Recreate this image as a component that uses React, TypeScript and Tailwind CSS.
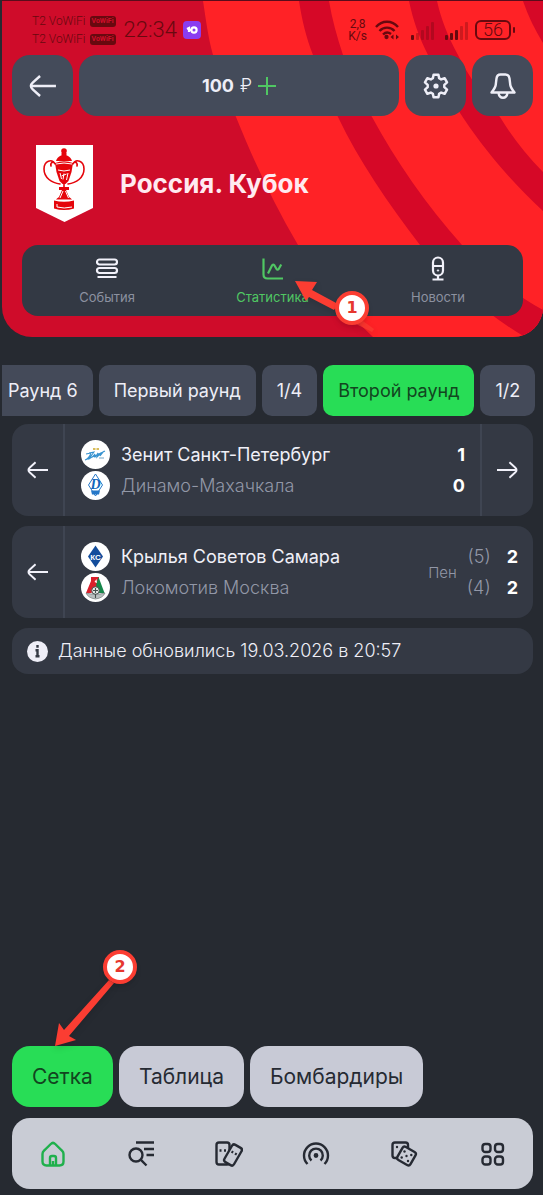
import type { ReactNode } from "react";
import clsx from "clsx";

const rounds = ["Раунд 6", "Первый раунд", "1/4", "Второй раунд", "1/2"];
const views = ["Сетка", "Таблица", "Бомбардиры"];

function HeaderPattern() {
  return (
    <svg
      aria-hidden
      className="absolute inset-0 h-full w-full"
      preserveAspectRatio="xMaxYMin slice"
      viewBox="0 0 541 336"
    >
      <path
        d="M201 0C204 19 206 36 211 54C217 77 225 97 234 116C251 158 271 202 296 244C318 280 345 311 371 336H541V0Z"
        fill="#ff2226"
      />
      <path
        d="M297 0C300 19 304 36 311 54C318 76 326 96 336 116C357 160 386 202 418 244C448 280 482 312 523 336L541 327V309C510 292 484 270 460 244C424 204 394 160 370 116C356 93 347 75 341 54C335 36 330 18 327 0Z"
        fill="#d60827"
      />
      <path
        d="M407 0C411 19 417 36 426 54C434 76 448 97 462 118C487 155 513 184 541 210V171C524 154 510 136 498 116C481 95 466 75 456 54C446 36 439 18 435 0Z"
        fill="#d60827"
      />
      <path d="M521 0C526 15 533 29 541 42V0Z" fill="#d60827" />
    </svg>
  );
}

function SignalBars({ active }: { active: number }) {
  return (
    <svg aria-hidden className="h-[19px] w-6" fill="#68090f" viewBox="0 0 24 19">
      {[5, 7, 10, 14, 18].map((h, i) => (
        <rect
          height={h}
          key={h}
          opacity={i < active ? 1 : 0.32}
          rx="1"
          width="3"
          x={i * 5}
          y={19 - h}
        />
      ))}
    </svg>
  );
}

function StatusBar() {
  return (
    <div className="flex h-[54px] items-center justify-between pl-5 pr-[18px] pt-1 font-[Roboto] text-[#68090f]">
      <div className="flex items-center">
        <div className="text-xs font-light leading-[18px]">
          {["sim1", "sim2"].map((sim) => (
            <div className="flex items-center gap-1" key={sim}>
              T2 VoWiFi
              <span className="flex h-[11px] w-[26px] items-center justify-center rounded-[3px] bg-[#68090f] text-[7px] font-bold leading-[11px] text-[#d00d2b]">
                VoWiFi
              </span>
            </div>
          ))}
        </div>
        <span className="ml-2 text-[22px] font-light leading-7">22:34</span>
        <span className="ml-1.5 grid h-[18px] w-[18px] place-items-center rounded bg-[#8a3df0]">
          <svg aria-hidden className="h-3 w-3" fill="none" stroke="#fff" strokeWidth="2.2" viewBox="0 0 12 12">
            <circle cx="8" cy="6" r="2.6" />
            <path d="M1 5l2-1v4M3 6h3" />
          </svg>
        </span>
      </div>
      <div className="flex items-center">
        <div className="text-center text-xs leading-3">
          <div>2,8</div>
          <div>K/s</div>
        </div>
        <svg aria-hidden className="ml-2 h-5 w-6" fill="none" stroke="#68090f" strokeWidth="2.4" viewBox="0 0 24 20">
          <path d="M1 7C7 0 17 0 23 7M4.500 11c4-4.500 11-4.500 15 0M8 14.500c2.500-2.500 5.500-2.500 8-.5" />
          <circle cx="11.500" cy="17" fill="#68090f" r="1.400" strokeWidth="1.500" />
          <path d="M15.500 17l3-2.500v5zM24 17l-3-2.500v5z" fill="#68090f" stroke="none" />
        </svg>
        <span className="ml-3 flex gap-2.5">
          <SignalBars active={1} />
          <SignalBars active={3} />
        </span>
        <span className="ml-1.5 grid h-5 w-9 place-items-center rounded-md border-2 border-[#68090f] text-lg font-light leading-4">
          56
        </span>
        <span className="ml-0.5 h-1.5 w-0.5 rounded-sm bg-[#68090f]" />
      </div>
    </div>
  );
}

function GearIcon() {
  const points: string[] = [];
  for (let tooth = 0; tooth < 6; tooth++) {
    for (const [offset, radius] of [[-22, 8.4], [-12, 11.6], [12, 11.6], [22, 8.4]]) {
      const angle = ((tooth * 60 - 90 + offset) * Math.PI) / 180;
      points.push(`${14 + radius * Math.cos(angle)},${14 + radius * Math.sin(angle)}`);
    }
  }

  return (
    <svg aria-hidden className="h-7 w-7" viewBox="0 0 28 28">
      <polygon
        fill="none"
        points={points.join(" ")}
        stroke="currentColor"
        strokeLinejoin="round"
        strokeWidth="2.5"
      />
      <circle cx="14" cy="14" fill="currentColor" r="2.6" />
    </svg>
  );
}

function BellIcon() {
  return (
    <svg aria-hidden className="h-7 w-7" fill="none" stroke="currentColor" strokeLinejoin="round" strokeWidth="2.4" viewBox="0 0 28 28">
      <path d="M11.500 2.500h5q3.500 0 4 4l.8 6.500q.3 2.500 4.200 7.500H2.500q3.900-5 4.200-7.500l.8-6.500q.5-4 4-4z" />
      <path d="M9.500 21c.5 3 2 4.800 4.500 4.800s4-1.800 4.500-4.800" />
    </svg>
  );
}

function BackArrow({ className }: { className: string }) {
  return (
    <svg aria-hidden className={className} fill="none" stroke="currentColor" strokeWidth="2" viewBox="0 0 22 18">
      <path d="M22 9H1.500M9 .8L3 6.300Q0 9 3 11.700L9 17.200" />
    </svg>
  );
}

function CupLogo() {
  return (
    <svg aria-hidden className="h-[77px] w-[57px]" viewBox="0 0 57 77">
      <path d="M0 0h57v63L28.500 77 0 63z" fill="#fff" />
      <g fill="#e5050b">
        <circle cx="28" cy="6" r="2.800" />
        <path d="M25.500 8h5v2.500h-5zM20 16q1-4 5-5.500h6q4 1.500 5 5.500z" />
        <path d="M19 18q9-3.500 18 0l-1.500 9-3 9-3 3h-3l-3-3-3-9z" />
        <path d="M23 42h10v3H23zM26 45h4l3 7q2 1 3 2.500H20q1-1.500 3-2.500zM18 55.500q10 2.500 20 0v8q-10 3-20 0z" />
      </g>
      <g fill="none" stroke="#e5050b" strokeLinecap="round" strokeWidth="1.600">
        <path d="M19 19c-3-6-11-3-11 5 0 9 8 14 16 15M37 19c3-6 11-3 11 5 0 9-8 14-16 15" />
        <path d="M15 21q-1-3 2-4M41 21q1-3-2-4M28 38v5" />
      </g>
      <g fill="none" stroke="#fff" strokeWidth="1">
        <path d="M20 19q8-2 16 0M22 25q6 2 12 0M24 28l1.500 6M28 28.500l-1 6M32 28l-1.500 7M25.500 31l5-2M27 46l-3 7M29.500 46l3 7M21 59v3q7 2 15 0" />
      </g>
    </svg>
  );
}

function ZenitLogo() {
  return (
    <>
      <path d="M4 20c3-1 5-4 6-7l-5 1M8 13l5-1c-2 3-5 6-5 7q4-2 6-5c-1 3-1 4 1 2l2-3-1 4 4-4-1 3 4-5M4 20q8-3 20-9" fill="none" stroke="#3893d0" strokeWidth="1.100" />
      <path d="M12 8h2.500v2H12zM15.500 8H18v2h-2.500z" fill="#d8bd5c" />
      <path d="M18 18h5" stroke="#75a5c6" strokeWidth="1.200" />
    </>
  );
}

function DynamoLogo() {
  return (
    <>
      <path d="M14.500 3l7 11-7 11-7-11z" fill="#fff" stroke="#2678c8" strokeWidth="1" />
      <text fill="#1266bb" fontFamily="Liberation Serif, serif" fontSize="14" fontStyle="italic" fontWeight="700" textAnchor="middle" x="14.500" y="18">
        D
      </text>
      <path d="M10 19.500h9l-1 4h-7z" fill="#2678c8" />
    </>
  );
}

function KrylyaLogo() {
  return (
    <>
      <path d="M14.500 3.500l7.500 11-7.500 11-7.500-11z" fill="#134d9c" />
      <text fill="#fff" fontFamily="Liberation Sans, sans-serif" fontSize="8" fontWeight="700" textAnchor="middle" x="14.500" y="17.500">
        КС
      </text>
    </>
  );
}

function LokomotivLogo() {
  return (
    <>
      <path d="M10 4h8l-1 10h-4L10.500 20H5l5-12z" fill="#d91f2b" />
      <path d="M17.500 4l6 16H18l-3-8z" fill="#16864a" />
      <path d="M13.500 9l2-3 .5 4z" fill="#fff" />
      <path d="M5 20q2 5 9.500 6Q22 25 24 20l-5 1H10z" fill="#b9bfc0" stroke="#626968" strokeWidth=".6" />
      <circle cx="14.500" cy="17.500" fill="#e4e8e7" r="3.800" stroke="#47504e" strokeWidth="1" />
      <path d="M14.500 15v5M12 17.500h5M14.500 21v4" stroke="#47504e" strokeWidth="1.100" />
    </>
  );
}

interface Team {
  name: string;
  score: number;
  penalties?: number;
  logo: ReactNode;
}

interface MatchCardProps {
  teams: Team[];
  hasNext?: boolean;
}

function MatchCard({ teams, hasNext = false }: MatchCardProps) {
  const hasPenalties = teams[0].penalties !== undefined;

  return (
    <article className="flex h-[92px] overflow-hidden rounded-2xl bg-[#343944]">
      <button
        aria-label="Предыдущий матч"
        className="grid w-[53px] shrink-0 place-items-center border-r-2 border-[#3f4552] text-[#f1f1fa]"
        type="button"
      >
        <BackArrow className="h-[18px] w-[21px]" />
      </button>
      <div className="flex flex-1 items-center pl-4 pr-[15px] text-lg leading-[29px]">
        <div className="flex flex-1 flex-col gap-0.5">
          {teams.map((team, i) => (
            <div className="flex items-center gap-[11px]" key={team.name}>
              <svg aria-hidden className="h-[29px] w-[29px]" viewBox="0 0 29 29">
                <circle cx="14.500" cy="14.500" fill="#fff" r="14.500" />
                {team.logo}
              </svg>
              <span className={i === 0 ? "text-[#f0f0f8]" : "font-light text-[#9297a7]"}>{team.name}</span>
            </div>
          ))}
        </div>
        {hasPenalties && <span className="mr-2.5 text-[15px] font-light text-[#9297a7]">Пен</span>}
        <div className="flex flex-col gap-0.5">
          {teams.map((team) => (
            <div className="flex justify-end gap-4" key={team.name}>
              {hasPenalties && <span className="font-light text-[#9297a7]">({team.penalties})</span>}
              <span className="font-bold text-white">{team.score}</span>
            </div>
          ))}
        </div>
      </div>
      {hasNext && (
        <button
          aria-label="Следующий матч"
          className="grid w-[53px] shrink-0 place-items-center border-l-2 border-[#3f4552] text-[#f1f1fa]"
          type="button"
        >
          <BackArrow className="h-[18px] w-[21px] rotate-180" />
        </button>
      )}
    </article>
  );
}

const sectionTabs = [
  {
    label: "События",
    icon: (
      <>
        <rect height="5" rx="2.500" width="20" x="4" y="4.500" />
        <rect height="5" rx="2.500" width="20" x="4" y="13" />
        <path d="M4.500 22h19" />
      </>
    ),
  },
  {
    label: "Статистика",
    icon: <path d="M4.500 3.500v16q0 4 4 4H24M9 18.500l4-8q1-2 2.500 0l2 3.500q1 1.500 2.200 0l2.500-4.500" />,
  },
  {
    label: "Новости",
    icon: (
      <>
        <rect height="18" rx="5" width="10" x="9" y="2.500" />
        <path d="M9 11h10M14 20.500v4M8.500 24.500h11" />
        <circle cx="14" cy="15.500" fill="currentColor" r=".7" strokeWidth="1" />
      </>
    ),
  },
];

const navItems = [
  {
    label: "Главная",
    icon: (
      <>
        <path d="M3.500 14q0-2 1.300-3.200L11.800 4q2.200-2.200 4.400 0l7 6.800Q24.500 12 24.500 14v7.500q0 4-4 4h-13q-4 0-4-4z" />
        <path d="M11 25v-7q0-2 2-2h2q2 0 2 2v7M14 25v-4" />
      </>
    ),
  },
  {
    label: "Поиск",
    icon: (
      <>
        <circle cx="9" cy="15" r="6.500" />
        <path d="M13.700 19.700l5.800 5.800M9 2.500h18M17 9h10M19.500 15H27" />
      </>
    ),
  },
  {
    label: "Купоны",
    icon: (
      <>
        <rect height="22" rx="2.500" width="13" x="1.500" y="2.500" />
        <rect fill="#c9ccd5" height="20" rx="2.500" transform="rotate(30 18 15)" width="11" x="12.500" y="5" />
        <path d="M4.500 10.500h2M9 10.500h2M16.500 11.500l1.700 1M20 13.500l1.700 1" />
      </>
    ),
  },
  {
    label: "Трансляции",
    icon: (
      <>
        <path d="M5.500 24a12 12 0 1 1 17 0M9.500 20.500a6.800 6.800 0 1 1 9 0" />
        <circle cx="14" cy="15.500" fill="currentColor" r="1.200" />
      </>
    ),
  },
  {
    label: "Игры",
    icon: (
      <>
        <rect height="15.500" rx="2.500" width="15.500" x="2.500" y="2.500" />
        <rect fill="#c9ccd5" height="15" rx="2.500" transform="rotate(30 16.500 16)" width="15" x="9" y="8.500" />
        <g fill="currentColor" stroke="none">
          <circle cx="7" cy="7" r="1.200" />
          <circle cx="14.500" cy="11.500" r="1.200" />
          <circle cx="21.300" cy="15" r="1.200" />
          <circle cx="16.500" cy="16" r="1.200" />
          <circle cx="11.700" cy="17.500" r="1.200" />
          <circle cx="18" cy="21" r="1.200" />
        </g>
      </>
    ),
  },
  {
    label: "Меню",
    icon: (
      <>
        <rect height="8" rx="2.800" width="8" x="4.500" y="4" />
        <rect height="8" rx="2.800" width="8" x="17" y="4" />
        <rect height="8" rx="2.800" width="8" x="4.500" y="16.500" />
        <rect height="8" rx="2.800" width="8" x="17" y="16.500" />
      </>
    ),
  },
];

function StepBadge({ step }: { step: number }) {
  return (
    <span className="absolute grid h-[34px] w-[34px] place-items-center rounded-full border-4 border-[#fb3d32] bg-white font-['DejaVu_Sans'] text-base font-bold leading-none text-[#e6372f] shadow-md">
      {step}
    </span>
  );
}

export default function App() {
  return (
    <div className="flex min-h-screen flex-col bg-[#262a31] pl-0.5 font-[Inter,sans-serif] text-[#eeeef7]">
      <header className="relative overflow-hidden rounded-b-[30px] border-t border-[#5a0c1b] bg-[#cf0c2a] pb-[21px]">
        <HeaderPattern />
        <div className="relative px-2.5">
          <StatusBar />
          <div className="flex gap-1.5">
            <button aria-label="Назад" className="grid h-[61px] w-[61px] place-items-center rounded-[18px] bg-[#444b5a]" type="button">
              <BackArrow className="h-[22px] w-[27px]" />
            </button>
            <button
              className="flex h-[61px] flex-1 items-center justify-center rounded-[18px] bg-[#444b5a] text-lg font-bold"
              type="button"
            >
              100<span className="ml-1.5 font-light">₽</span>
              <svg aria-hidden className="ml-1.5 h-[18px] w-[18px]" stroke="#50c763" strokeWidth="2" viewBox="0 0 18 18">
                <path d="M9 0v18M0 9h18" />
              </svg>
            </button>
            <button aria-label="Настройки" className="grid h-[61px] w-[61px] place-items-center rounded-[18px] bg-[#444b5a]" type="button">
              <GearIcon />
            </button>
            <button aria-label="Уведомления" className="grid h-[61px] w-[61px] place-items-center rounded-[18px] bg-[#444b5a]" type="button">
              <BellIcon />
            </button>
          </div>

          <div className="mt-[29px] flex items-center gap-[27px] pl-6">
            <CupLogo />
            <h1 className="text-[26px] font-bold text-[#ffeaf0]">Россия. Кубок</h1>
          </div>

          <nav className="relative mx-2.5 mt-[23px] grid h-[71px] grid-cols-[170px_1fr_170px] rounded-2xl bg-[#333944]">
            {sectionTabs.map((tab, i) => (
              <button
                className={clsx(
                  "flex flex-col items-center gap-1 pt-2.5 text-[13px] leading-5",
                  i === 1 ? "text-[#50c763]" : "text-[#8c91a0]",
                )}
                key={tab.label}
                type="button"
              >
                <svg
                  aria-hidden
                  className={clsx("h-7 w-7", i !== 1 && "text-[#f1f1fa]")}
                  fill="none"
                  stroke="currentColor"
                  strokeWidth="2.2"
                  viewBox="0 0 28 28"
                >
                  {tab.icon}
                </svg>
                {tab.label}
              </button>
            ))}
            <div className="absolute left-[272px] top-9 h-[60px] w-[90px]">
              <svg aria-hidden className="h-full w-full drop-shadow-md" fill="#fb3d32" viewBox="0 0 90 60">
                <path d="M1 0l22 1-5 8 26 14-4 6-25-13-3 4z" />
                <path d="M66 38l14 10-2 3-16-8z" opacity=".7" />
              </svg>
              <div className="absolute left-[41px] top-[10px]">
                <StepBadge step={1} />
              </div>
            </div>
          </nav>
        </div>
      </header>

      <div className="mt-7 overflow-hidden">
        <div className="-ml-[9px] flex gap-1.5">
          {rounds.map((round) => (
            <button
              className={clsx(
                "h-[51px] shrink-0 rounded-[10px] px-[15px] text-lg",
                round === "Второй раунд" ? "bg-[#28dd56] text-[#12451f]" : "bg-[#444a59]",
              )}
              key={round}
              type="button"
            >
              {round}
            </button>
          ))}
        </div>
      </div>

      <main className="mt-2 flex flex-col gap-2.5 px-2.5">
        <MatchCard
          hasNext
          teams={[
            { name: "Зенит Санкт-Петербург", score: 1, logo: <ZenitLogo /> },
            { name: "Динамо-Махачкала", score: 0, logo: <DynamoLogo /> },
          ]}
        />
        <MatchCard
          teams={[
            { name: "Крылья Советов Самара", score: 2, penalties: 5, logo: <KrylyaLogo /> },
            { name: "Локомотив Москва", score: 2, penalties: 4, logo: <LokomotivLogo /> },
          ]}
        />
        <p className="flex h-[46px] items-center gap-2.5 rounded-2xl bg-[#343944] pl-[15px] text-lg font-light">
          <svg aria-hidden className="h-[21px] w-[21px]" viewBox="0 0 21 21">
            <circle cx="10.500" cy="10.500" fill="#eeeef7" r="10.500" />
            <path d="M10.500 4v2.800M8.500 9.200h2V15M8.500 15.300h4" fill="none" stroke="#343944" strokeWidth="2.400" />
          </svg>
          Данные обновились 19.03.2026 в 20:57
        </p>
      </main>

      <footer className="mt-auto px-2.5 pb-1.5">
        <div className="relative flex gap-1.5">
          {views.map((view, i) => (
            <button
              className={clsx(
                "h-[61px] rounded-[18px] px-5 text-[21px]",
                i === 0 ? "bg-[#28dd56] text-[#12451f]" : "bg-[#c8cad6] text-[#262a33]",
              )}
              key={view}
              type="button"
            >
              {view}
            </button>
          ))}
          <div className="absolute -top-[96px] left-[42px] h-24 w-[84px]">
            <svg aria-hidden className="h-full w-full drop-shadow-md" fill="#fb3d32" viewBox="0 0 84 96">
              <path d="M1 96L5 73l5 7 45-50 5 3-45 53 7 4z" />
            </svg>
            <div className="absolute left-[49px] top-0">
              <StepBadge step={2} />
            </div>
          </div>
        </div>

        <nav className="mt-[11px] flex h-[71px] items-center justify-between rounded-[18px] bg-[#c9ccd5] px-[27px]">
          {navItems.map((item, i) => (
            <button
              aria-label={item.label}
              className={i === 0 ? "text-[#1fb04c]" : "text-[#262a33]"}
              key={item.label}
              type="button"
            >
              <svg aria-hidden className="h-7 w-7" fill="none" stroke="currentColor" strokeWidth="2.400" viewBox="0 0 28 28">
                {item.icon}
              </svg>
            </button>
          ))}
        </nav>
      </footer>
    </div>
  );
}
